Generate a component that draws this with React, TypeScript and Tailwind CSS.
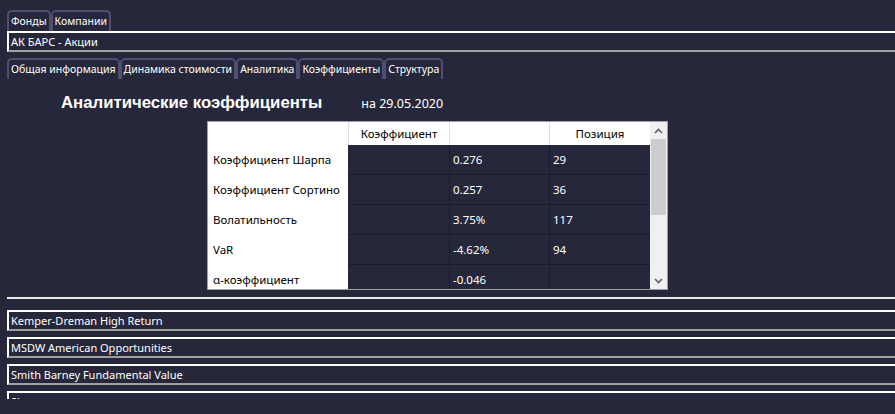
import React from 'react';

const rows = [
  { name: 'Коэффициент Шарпа', value: '0.276', pos: '29' },
  { name: 'Коэффициент Сортино', value: '0.257', pos: '36' },
  { name: 'Волатильность', value: '3.75%', pos: '117' },
  { name: 'VaR', value: '-4.62%', pos: '94' },
  { name: 'α-коэффициент', value: '-0.046', pos: '' },
];

const funds = ['Kemper-Dreman High Return', 'MSDW American Opportunities', 'Smith Barney Fundamental Value', 'Sl'];

const Tab = ({ label }: { label: string }) => (
  <div className="h-[21px] px-[2px] border-2 border-b-0 border-[#4e4e72] rounded-t-[5px] text-[10.5px] leading-[18px] text-white whitespace-nowrap">
    {label}
  </div>
);

export default function App() {
  return (
    <div
      className="w-[895px] h-[414px] overflow-hidden bg-[#26273a] text-white"
      style={{ fontFamily: '"Noto Sans", "DejaVu Sans", sans-serif' }}
    >
      <div className="pl-[7px] pt-[10px]">
        <div className="flex">
          <Tab label="Фонды" />
          <Tab label="Компании" />
        </div>
        <div className="h-[21px] border-t-2 border-l-2 border-white border-b-2 border-b-[#a0a0a0] text-[11px] leading-[17px] pl-[2px]">
          АК БАРС - Акции
        </div>
        <div className="flex mt-[6px]">
          <Tab label="Общая информация" />
          <Tab label="Динамика стоимости" />
          <Tab label="Аналитика" />
          <Tab label="Коэффициенты" />
          <Tab label="Структура" />
        </div>
        <div className="flex items-end h-[35px] pl-[54px]">
          <span className="text-[16.75px] font-bold leading-[22px]" style={{ fontFamily: '"Liberation Sans", Arial, sans-serif' }}>
            Аналитические коэффициенты
          </span>
          <span className="text-[12.5px] leading-[20px] ml-[39px]">на 29.05.2020</span>
        </div>
        <div className="ml-[200px] mt-[7px] w-[461px] h-[169px] border border-[#a0a0a0] flex overflow-hidden">
          <div className="w-[442px]">
            <div className="flex h-[23px] bg-white text-black text-[11.5px] leading-[23px]">
              <div className="w-[140px]" />
              <div className="w-[101px] border-l border-[#e0e0e0] text-center">Коэффициент</div>
              <div className="w-[100px] border-l border-[#e0e0e0]" />
              <div className="w-[101px] border-l border-[#e0e0e0] text-center">Позиция</div>
            </div>
            {rows.map((r) => (
              <div key={r.name} className="flex h-[30px] text-[11.5px] leading-[29px]">
                <div className="w-[140px] bg-white text-black pl-[5px]">{r.name}</div>
                <div className="w-[101px] border-b border-[#1c1d2c]" />
                <div className="w-[100px] border-l border-b border-[#1c1d2c] pl-[3px]">{r.value}</div>
                <div className="w-[101px] border-l border-b border-[#1c1d2c] pl-[3px]">{r.pos}</div>
              </div>
            ))}
          </div>
          <div className="w-[17px] bg-[#f0f0f0] flex flex-col items-center">
            <div className="h-[17px] flex items-center justify-center">
              <svg width="9" height="6" viewBox="0 0 9 6">
                <path d="M1 5 L4.5 1.5 L8 5" stroke="#606060" strokeWidth="1.6" fill="none" />
              </svg>
            </div>
            <div className="w-[15px] h-[76px] bg-[#cdcdcd]" />
            <div className="flex-1" />
            <div className="h-[17px] flex items-center justify-center">
              <svg width="9" height="6" viewBox="0 0 9 6">
                <path d="M1 1 L4.5 4.5 L8 1" stroke="#606060" strokeWidth="1.6" fill="none" />
              </svg>
            </div>
          </div>
        </div>
        <div className="mt-[7px] h-[2px] bg-[#e8e8e8]" />
        <div className="mt-[11px] h-[89px] overflow-hidden flex flex-col gap-[6px]">
          {funds.map((f) => (
            <div
              key={f}
              className="h-[21px] shrink-0 border-t-2 border-l-2 border-white border-b-2 border-b-[#a0a0a0] text-[11px] leading-[17px] pl-[2px] overflow-hidden"
            >
              {f}
            </div>
          ))}
        </div>
      </div>
    </div>
  );
}
